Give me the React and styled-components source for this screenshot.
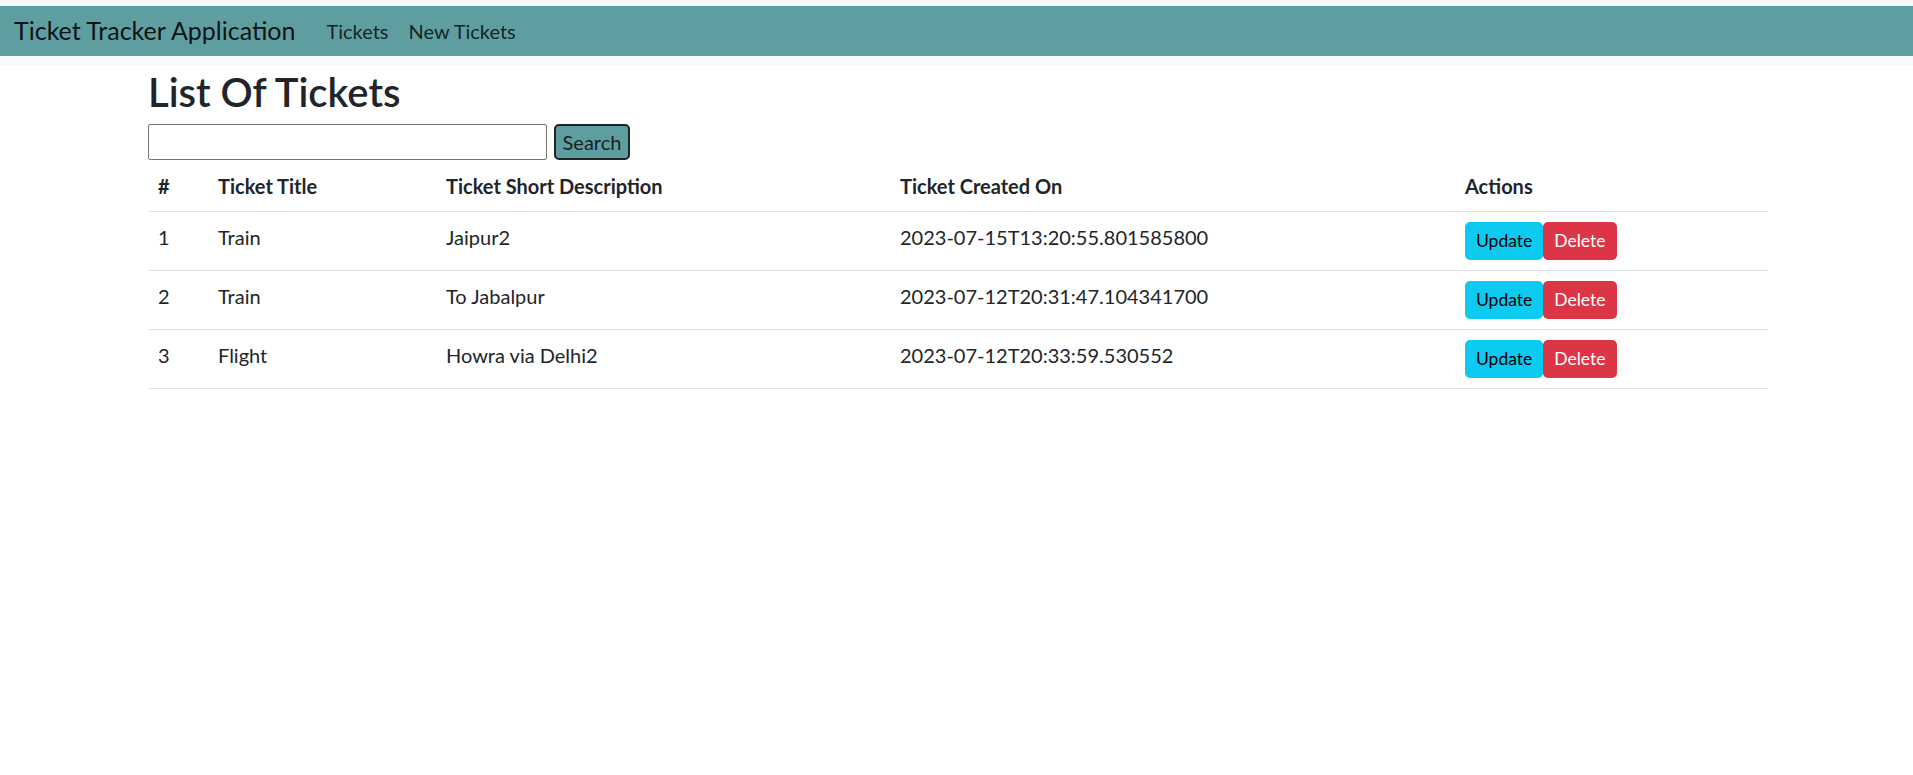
import styled, { createGlobalStyle } from 'styled-components'

const TICKETS = [
  { id: 1, title: 'Train', description: 'Jaipur2', createdOn: '2023-07-15T13:20:55.801585800' },
  { id: 2, title: 'Train', description: 'To Jabalpur', createdOn: '2023-07-12T20:31:47.104341700' },
  { id: 3, title: 'Flight', description: 'Howra via Delhi2', createdOn: '2023-07-12T20:33:59.530552' },
]

const COLUMNS = [
  { label: '#', width: 60 },
  { label: 'Ticket Title', width: 228 },
  { label: 'Ticket Short Description', width: 454 },
  { label: 'Ticket Created On', width: 565 },
  { label: 'Actions', width: 313 },
]

const GlobalStyle = createGlobalStyle`
  body {
    margin: 0;
    background: #fff;
    color: #212529;
    font-family: 'Segoe UI', Lato, 'Noto Sans', sans-serif;
    font-size: 20px;
    line-height: 1.5;
  }
`

const NavWrap = styled.header`
  background: #f8f9fa;
  padding: 6px 0 9px;
`

const NavBar = styled.nav`
  display: flex;
  align-items: center;
  height: 50px;
  padding: 0 14px;
  background: #5f9ea0;
`

const Brand = styled.a`
  font-size: 25px;
  color: rgba(0, 0, 0, 0.9);
  text-decoration: none;
  margin-right: 21px;
`

const NavLink = styled.a`
  padding: 0 10px;
  font-size: 20px;
  color: rgba(0, 0, 0, 0.8);
  text-decoration: none;
`

const Container = styled.main`
  width: 1620px;
  margin: 0 0 0 148px;
`

const Heading = styled.h2`
  margin: 0 0 8px;
  padding-top: 3px;
  font-size: 40px;
  font-weight: 600;
  line-height: 48px;
`

const SearchRow = styled.form`
  display: flex;
  gap: 7px;
  height: 36px;
`

const SearchInput = styled.input`
  box-sizing: border-box;
  width: 399px;
  height: 36px;
  border: 1px solid #767676;
  border-radius: 2px;
  font: inherit;
`

const SearchButton = styled.button`
  box-sizing: border-box;
  width: 76px;
  height: 36px;
  padding: 0;
  background: #5f9ea0;
  border: 2px solid #1e2424;
  border-radius: 5px;
  font: inherit;
  color: #1b1f1f;
`

const Table = styled.table`
  width: 100%;
  margin-top: 1px;
  border-collapse: collapse;
  table-layout: fixed;
`

const HeadCell = styled.th`
  box-sizing: border-box;
  width: ${({ $width }) => $width}px;
  padding: 10px;
  text-align: left;
  font-weight: 700;
  line-height: 30px;
  border-bottom: 1px solid #dee2e6;
`

const Cell = styled.td`
  padding: 10px;
  vertical-align: top;
  line-height: 30px;
  border-bottom: 1px solid #dee2e6;
`

const ActionButton = styled.button`
  height: 38px;
  padding: 0 10px;
  border: 1px solid transparent;
  border-radius: 5px;
  font-family: inherit;
  font-size: 17.5px;
  line-height: 26px;
  vertical-align: top;
  background: ${({ $variant }) => ($variant === 'danger' ? '#dc3545' : '#0dcaf0')};
  color: ${({ $variant }) => ($variant === 'danger' ? '#fff' : '#000')};
`

const App = () => {
  return (
    <>
      <GlobalStyle />
      <NavWrap>
        <NavBar>
          <Brand href="#">Ticket Tracker Application</Brand>
          <NavLink href="#">Tickets</NavLink>
          <NavLink href="#">New Tickets</NavLink>
        </NavBar>
      </NavWrap>
      <Container>
        <Heading>List Of Tickets</Heading>
        <SearchRow onSubmit={(e) => e.preventDefault()}>
          <SearchInput type="text" />
          <SearchButton type="submit">Search</SearchButton>
        </SearchRow>
        <Table>
          <thead>
            <tr>
              {COLUMNS.map(({ label, width }) => (
                <HeadCell key={label} $width={width}>
                  {label}
                </HeadCell>
              ))}
            </tr>
          </thead>
          <tbody>
            {TICKETS.map((ticket) => (
              <tr key={ticket.id}>
                <Cell>{ticket.id}</Cell>
                <Cell>{ticket.title}</Cell>
                <Cell>{ticket.description}</Cell>
                <Cell>{ticket.createdOn}</Cell>
                <Cell>
                  <ActionButton>Update</ActionButton>
                  <ActionButton $variant="danger">Delete</ActionButton>
                </Cell>
              </tr>
            ))}
          </tbody>
        </Table>
      </Container>
    </>
  )
}

export default App
